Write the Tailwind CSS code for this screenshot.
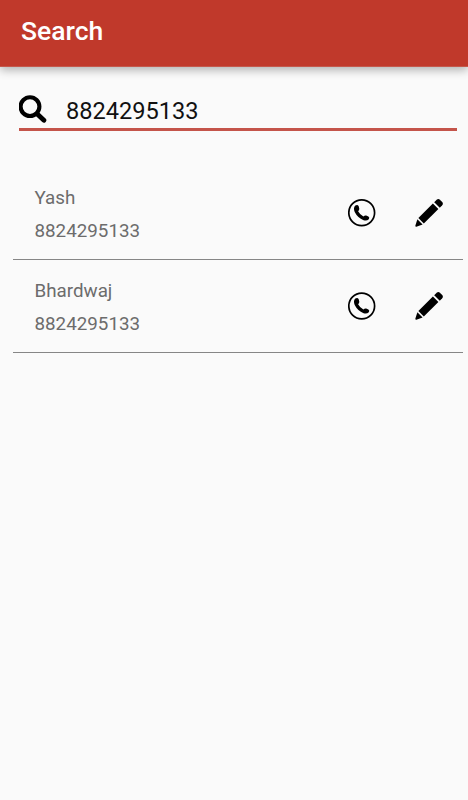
<!DOCTYPE html>
<html lang="en">
<head>
  <meta charset="UTF-8">
  <meta name="viewport" content="width=device-width, initial-scale=1.0">
  <title>Search</title>
  <script src="https://cdn.jsdelivr.net/npm/@tailwindcss/browser@4"></script>
</head>
<body class="bg-[#fafafa] font-['Roboto',sans-serif]">
  <div class="flex flex-col min-h-screen">
    <!-- Header -->
    <header class="h-[67px] pl-[21px] pt-[11px] bg-[#c0392b] border-b border-[#c4584c] shadow-[0_3px_9px_rgba(0,0,0,0.3)]">
      <h1 class="text-[26.5px] leading-10 font-medium text-white">Search</h1>
    </header>

    <main class="flex-1 pl-[13px] pr-[5px]">
      <!-- Search box -->
      <div class="mt-7 ml-[6px] mr-[6px] h-9 flex items-start border-b-[3px] border-[#c4544a]">
        <svg class="w-7 h-7 shrink-0" viewBox="0 0 28 28" fill="none" stroke="black">
          <circle cx="11" cy="11.6" r="9.4" stroke-width="4.1" />
          <path d="M18 18.7L24.9 25.3" stroke-width="4.8" stroke-linecap="round" />
        </svg>
        <span class="ml-[19px] text-[23.6px] leading-8 text-[#111]">8824295133</span>
      </div>

      <!-- Contacts -->
      <ul class="mt-9">
        <li class="h-[93px] flex items-start border-b border-[#868686]">
          <div class="flex-1 pl-[21.5px] pt-[15px] text-[18.8px] leading-[33px] text-[#6c6c6c]">
            <p>Yash</p>
            <p>8824295133</p>
          </div>
          <svg class="mt-8 w-7 h-7" viewBox="0 0 28 28">
            <circle cx="13.7" cy="13.8" r="12.9" fill="none" stroke="black" stroke-width="1.7" />
            <path d="M7.3 6.6Q9.6 5 10.7 7.3L11.3 9.7Q11.4 11.1 10.1 12.2Q11.5 15.1 15.4 17.4Q16.8 16.2 18.2 16.6L20.4 17.4Q22 18.7 20.8 20.2Q18.8 22.3 15.6 21.2Q9.6 18.8 6.7 13Q5 8.8 7.3 6.6Z" />
          </svg>
          <svg class="mt-8 ml-[39px] mr-5 w-7 h-7" viewBox="0 0 28 28">
            <path d="M19.2 3.2L21.7 0.8Q23.3 -0.6 24.9 0.8L27.2 3.1Q28.6 4.7 27.2 6.3L24.8 8.8Z" />
            <path d="M17.9 4.6L23.4 10.1L8.8 24.4L3.4 19Z" />
            <path d="M2.4 20.2L7.6 25.4L1.4 27.7Q0 28 0.4 26.6Z" />
          </svg>
        </li>
        <li class="h-[93px] flex items-start border-b border-[#868686]">
          <div class="flex-1 pl-[21.5px] pt-[15px] text-[18.8px] leading-[33px] text-[#6c6c6c]">
            <p>Bhardwaj</p>
            <p>8824295133</p>
          </div>
          <svg class="mt-8 w-7 h-7" viewBox="0 0 28 28">
            <circle cx="13.7" cy="14" r="12.9" fill="none" stroke="black" stroke-width="1.7" />
            <path d="M7.3 6.6Q9.6 5 10.7 7.3L11.3 9.7Q11.4 11.1 10.1 12.2Q11.5 15.1 15.4 17.4Q16.8 16.2 18.2 16.6L20.4 17.4Q22 18.7 20.8 20.2Q18.8 22.3 15.6 21.2Q9.6 18.8 6.7 13Q5 8.8 7.3 6.6Z" />
          </svg>
          <svg class="mt-8 ml-[39px] mr-5 w-7 h-7" viewBox="0 0 28 28">
            <path d="M19.2 3.2L21.7 0.8Q23.3 -0.6 24.9 0.8L27.2 3.1Q28.6 4.7 27.2 6.3L24.8 8.8Z" />
            <path d="M17.9 4.6L23.4 10.1L8.8 24.4L3.4 19Z" />
            <path d="M2.4 20.2L7.6 25.4L1.4 27.7Q0 28 0.4 26.6Z" />
          </svg>
        </li>
      </ul>
    </main>
  </div>
</body>
</html>
